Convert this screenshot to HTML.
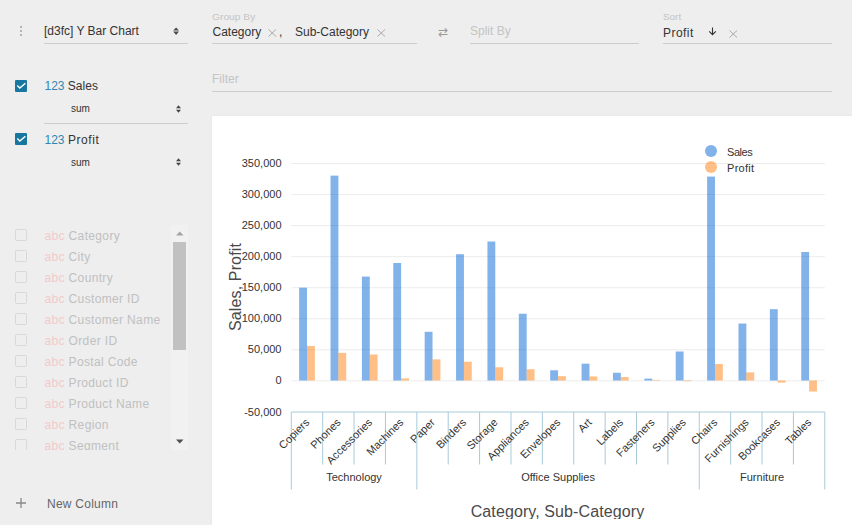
<!DOCTYPE html>
<html><head><meta charset="utf-8"><style>
*{box-sizing:border-box}
html,body{margin:0;padding:0}
body{width:852px;height:525px;overflow:hidden;background:#eeeeee;position:relative;font-family:"Liberation Sans",sans-serif;color:#333}
.a{position:absolute}
.t{position:absolute;white-space:nowrap;line-height:0}
.ul{position:absolute;height:1px;background:#ccc}
.cb{position:absolute;left:15px;width:12px;height:12px}
.cb.on{background:#17779f;border-radius:1px}
.cb.off{border:1px solid #d8d8d8;border-radius:1.5px}
.lbl{position:absolute;left:44.5px;font-size:12px;line-height:0;white-space:nowrap;color:#c0c0c0;letter-spacing:0.35px}
.abc{color:#f2caca}
.num{color:#2e88b2}
#chart{position:absolute;left:212px;top:116px;width:640px;height:409px;background:#fff;box-shadow:0 0 2px rgba(0,0,0,0.06)}
svg{position:absolute;left:0;top:0}
.g{stroke:#ececec;stroke-width:1}
.ax{stroke:#a9cad9;stroke-width:1}
.bs{fill:rgba(3,102,214,0.5)}
.bp{fill:rgba(255,127,14,0.5)}
.yt{font-size:11px;text-anchor:end;fill:#333}
.xt{font-size:11px;text-anchor:end;fill:#333}
.ct{font-size:11px;text-anchor:middle;fill:#333}
.lg{font-size:11px;fill:#333}
.at{font-size:16px;text-anchor:middle;fill:#4a4a4a}
</style></head><body>
<!-- sidebar -->
<div class="a" style="left:19.5px;top:25.8px;width:2.5px;height:2.5px;background:#a0a0a0;border-radius:50%"></div>
<div class="a" style="left:19.5px;top:29.8px;width:2.5px;height:2.5px;background:#a0a0a0;border-radius:50%"></div>
<div class="a" style="left:19.5px;top:33.8px;width:2.5px;height:2.5px;background:#a0a0a0;border-radius:50%"></div>
<div class="t" style="left:44px;top:31px;font-size:12px;color:#333">[d3fc] Y Bar Chart</div>
<svg class="a" style="left:172.5px;top:27px" width="7" height="9" viewBox="0 0 7 9"><path d="M0.2 3.5 L3.1 0.4 L6 3.5Z M0.2 4.5 L3.1 7.9 L6 4.5Z" fill="#4a4a4a"/></svg>
<div class="ul" style="left:44px;top:43px;width:144px"></div>

<div class="cb on" style="top:80px"></div>
<svg class="a" style="left:15px;top:80px" width="12" height="12"><path d="M2.3 5.5 L4.8 8.1 L10.4 3.2" stroke="#fff" stroke-width="1.4" fill="none"/></svg>
<div class="t" style="left:44.5px;top:85.5px;font-size:12px"><span class="num">123</span> Sales</div>
<div class="t" style="left:71px;top:108.5px;font-size:10px;color:#333">sum</div>
<svg class="a" style="left:176px;top:105px" width="5" height="8" viewBox="0 0 5 8"><path d="M0 3.3 L2.5 0.3 L5 3.3Z M0 4.7 L2.5 7.7 L5 4.7Z" fill="#444"/></svg>
<div class="ul" style="left:44px;top:123px;width:144px"></div>

<div class="cb on" style="top:133px"></div>
<svg class="a" style="left:15px;top:133px" width="12" height="12"><path d="M2.3 5.5 L4.8 8.1 L10.4 3.2" stroke="#fff" stroke-width="1.4" fill="none"/></svg>
<div class="t" style="left:44.5px;top:139.5px;font-size:12px"><span class="num">123</span> <span style="letter-spacing:0.6px">Profit</span></div>
<div class="t" style="left:71px;top:162.5px;font-size:10px;color:#333">sum</div>
<svg class="a" style="left:176px;top:158px" width="5" height="8" viewBox="0 0 5 8"><path d="M0 3.3 L2.5 0.3 L5 3.3Z M0 4.7 L2.5 7.7 L5 4.7Z" fill="#444"/></svg>

<div class="a" style="left:0;top:225px;width:190px;height:225px;overflow:hidden">
<div class="a" style="left:0;top:-225px;width:190px;height:500px">
<div class="cb off" style="top:229px"></div><div class="lbl off" style="top:236.4px"><span class="abc">abc</span> Category</div>
<div class="cb off" style="top:250px"></div><div class="lbl off" style="top:257.4px"><span class="abc">abc</span> City</div>
<div class="cb off" style="top:271px"></div><div class="lbl off" style="top:278.4px"><span class="abc">abc</span> Country</div>
<div class="cb off" style="top:292px"></div><div class="lbl off" style="top:299.4px"><span class="abc">abc</span> Customer ID</div>
<div class="cb off" style="top:313px"></div><div class="lbl off" style="top:320.4px"><span class="abc">abc</span> Customer Name</div>
<div class="cb off" style="top:334px"></div><div class="lbl off" style="top:341.4px"><span class="abc">abc</span> Order ID</div>
<div class="cb off" style="top:355px"></div><div class="lbl off" style="top:362.4px"><span class="abc">abc</span> Postal Code</div>
<div class="cb off" style="top:376px"></div><div class="lbl off" style="top:383.4px"><span class="abc">abc</span> Product ID</div>
<div class="cb off" style="top:397px"></div><div class="lbl off" style="top:404.4px"><span class="abc">abc</span> Product Name</div>
<div class="cb off" style="top:418px"></div><div class="lbl off" style="top:425.4px"><span class="abc">abc</span> Region</div>
<div class="cb off" style="top:439px"></div><div class="lbl off" style="top:446.4px"><span class="abc">abc</span> Segment</div>
</div>
<div class="a" style="left:171px;top:0;width:17px;height:225px;background:#f1f1f1"></div>
<svg class="a" style="left:175.5px;top:5.8px" width="8" height="5"><path d="M0 4.5 L3.75 0.5 L7.5 4.5Z" fill="#a3a3a3"/></svg>
<div class="a" style="left:173px;top:17px;width:13px;height:108px;background:#c1c1c1"></div>
<svg class="a" style="left:175.5px;top:213.5px" width="8" height="5"><path d="M0 0.5 L3.75 4.5 L7.5 0.5Z" fill="#505050"/></svg>
</div>

<svg class="a" style="left:15px;top:497px" width="12" height="12"><path d="M6 1 V11 M1 6 H11" stroke="#888" stroke-width="1.3"/></svg>
<div class="t" style="left:47px;top:503.5px;font-size:12px;color:#666;letter-spacing:0.25px">New Column</div>

<!-- top bar -->
<div class="t" style="left:212px;top:16.6px;font-size:9px;color:#c4c4c4;transform:scaleX(1.14);transform-origin:0 0">Group By</div>
<div class="t" style="left:212.5px;top:31.5px;font-size:12px;color:#333">Category</div>
<svg class="a" style="left:267.5px;top:29px" width="9" height="8"><path d="M0.5 0.5 L8 7.5 M8 0.5 L0.5 7.5" stroke="#aaa" stroke-width="1"/></svg>
<div class="t" style="left:279px;top:31.5px;font-size:12px;color:#333">,</div>
<div class="t" style="left:295px;top:31.5px;font-size:12px;color:#333">Sub-Category</div>
<svg class="a" style="left:376.5px;top:29px" width="9" height="8"><path d="M0.5 0.5 L8 7.5 M8 0.5 L0.5 7.5" stroke="#aaa" stroke-width="1"/></svg>
<div class="ul" style="left:212px;top:43px;width:205px"></div>
<div class="t" style="left:438px;top:32px;font-size:12px;color:#999">&#8644;</div>
<div class="t" style="left:470px;top:31px;font-size:12px;color:#c4c4c4">Split By</div>
<div class="ul" style="left:470px;top:43px;width:169px"></div>
<div class="t" style="left:663px;top:16.7px;font-size:9px;color:#c4c4c4;transform:scaleX(1.1);transform-origin:0 0">Sort</div>
<div class="t" style="left:663px;top:32.5px;font-size:12px;color:#333;letter-spacing:0.45px">Profit</div>
<svg class="a" style="left:708px;top:27px" width="9" height="9"><path d="M4.5 0.5 V7.5 M1.2 4.3 L4.5 7.6 L7.8 4.3" stroke="#333" stroke-width="1.1" fill="none"/></svg>
<svg class="a" style="left:728.5px;top:29.5px" width="9" height="8"><path d="M0.5 0.5 L8 7.5 M8 0.5 L0.5 7.5" stroke="#aaa" stroke-width="1"/></svg>
<div class="ul" style="left:663px;top:43px;width:169px"></div>
<div class="t" style="left:212px;top:78.5px;font-size:12px;color:#c4c4c4">Filter</div>
<div class="ul" style="left:212px;top:91px;width:620px"></div>

<div id="chart"><svg width="640" height="403" viewBox="212 116 640 403">
<line x1="291.30" x2="824.8" y1="380.85" y2="380.85" class="g"/>
<text x="281.5" y="384.30" class="yt">0</text>
<line x1="291.30" x2="824.8" y1="349.81" y2="349.81" class="g"/>
<text x="281.5" y="353.26" class="yt">50,000</text>
<line x1="291.30" x2="824.8" y1="318.76" y2="318.76" class="g"/>
<text x="281.5" y="322.21" class="yt">100,000</text>
<line x1="291.30" x2="824.8" y1="287.72" y2="287.72" class="g"/>
<text x="281.5" y="291.17" class="yt">150,000</text>
<line x1="291.30" x2="824.8" y1="256.68" y2="256.68" class="g"/>
<text x="281.5" y="260.13" class="yt">200,000</text>
<line x1="291.30" x2="824.8" y1="225.64" y2="225.64" class="g"/>
<text x="281.5" y="229.09" class="yt">250,000</text>
<line x1="291.30" x2="824.8" y1="194.59" y2="194.59" class="g"/>
<text x="281.5" y="198.04" class="yt">300,000</text>
<line x1="291.30" x2="824.8" y1="163.55" y2="163.55" class="g"/>
<text x="281.5" y="167.00" class="yt">350,000</text>
<text x="281.5" y="415.80" class="yt">-50,000</text>
<rect x="299.15" y="287.66" width="7.85" height="92.84" class="bs"/>
<rect x="306.99" y="345.97" width="7.85" height="34.53" class="bp"/>
<rect x="330.53" y="175.61" width="7.85" height="204.89" class="bs"/>
<rect x="338.37" y="352.86" width="7.85" height="27.64" class="bp"/>
<rect x="361.91" y="276.58" width="7.85" height="103.92" class="bs"/>
<rect x="369.76" y="354.46" width="7.85" height="26.04" class="bp"/>
<rect x="393.29" y="263.01" width="7.85" height="117.49" class="bs"/>
<rect x="401.14" y="378.40" width="7.85" height="2.10" class="bp"/>
<rect x="424.68" y="331.78" width="7.85" height="48.72" class="bs"/>
<rect x="432.52" y="359.36" width="7.85" height="21.14" class="bp"/>
<rect x="456.06" y="254.21" width="7.85" height="126.29" class="bs"/>
<rect x="463.90" y="361.74" width="7.85" height="18.76" class="bp"/>
<rect x="487.44" y="241.52" width="7.85" height="138.98" class="bs"/>
<rect x="495.29" y="367.29" width="7.85" height="13.21" class="bp"/>
<rect x="518.82" y="313.74" width="7.85" height="66.76" class="bs"/>
<rect x="526.67" y="369.24" width="7.85" height="11.26" class="bp"/>
<rect x="550.20" y="370.27" width="7.85" height="10.23" class="bs"/>
<rect x="558.05" y="376.18" width="7.85" height="4.32" class="bp"/>
<rect x="581.59" y="363.66" width="7.85" height="16.84" class="bs"/>
<rect x="589.43" y="376.45" width="7.85" height="4.05" class="bp"/>
<rect x="612.97" y="372.75" width="7.85" height="7.75" class="bs"/>
<rect x="620.81" y="377.06" width="7.85" height="3.44" class="bp"/>
<rect x="644.35" y="378.62" width="7.85" height="1.88" class="bs"/>
<rect x="652.20" y="379.91" width="7.85" height="0.59" class="bp"/>
<rect x="675.73" y="351.52" width="7.85" height="28.98" class="bs"/>
<rect x="683.58" y="380.50" width="7.85" height="0.74" class="bp"/>
<rect x="707.12" y="176.58" width="7.85" height="203.92" class="bs"/>
<rect x="714.96" y="363.99" width="7.85" height="16.51" class="bp"/>
<rect x="738.50" y="323.56" width="7.85" height="56.94" class="bs"/>
<rect x="746.34" y="372.39" width="7.85" height="8.11" class="bp"/>
<rect x="769.88" y="309.18" width="7.85" height="71.32" class="bs"/>
<rect x="777.73" y="380.50" width="7.85" height="2.16" class="bp"/>
<rect x="801.26" y="252.00" width="7.85" height="128.50" class="bs"/>
<rect x="809.11" y="380.50" width="7.85" height="11.00" class="bp"/>
<line x1="291.30" x2="824.8" y1="412.0" y2="412.0" class="ax"/>
<line x1="291.30" x2="291.30" y1="412.0" y2="489.5" class="ax"/>
<line x1="322.68" x2="322.68" y1="412.0" y2="464.5" class="ax"/>
<line x1="354.06" x2="354.06" y1="412.0" y2="464.5" class="ax"/>
<line x1="385.45" x2="385.45" y1="412.0" y2="464.5" class="ax"/>
<line x1="416.83" x2="416.83" y1="412.0" y2="489.5" class="ax"/>
<line x1="448.21" x2="448.21" y1="412.0" y2="464.5" class="ax"/>
<line x1="479.59" x2="479.59" y1="412.0" y2="464.5" class="ax"/>
<line x1="510.98" x2="510.98" y1="412.0" y2="464.5" class="ax"/>
<line x1="542.36" x2="542.36" y1="412.0" y2="464.5" class="ax"/>
<line x1="573.74" x2="573.74" y1="412.0" y2="464.5" class="ax"/>
<line x1="605.12" x2="605.12" y1="412.0" y2="464.5" class="ax"/>
<line x1="636.51" x2="636.51" y1="412.0" y2="464.5" class="ax"/>
<line x1="667.89" x2="667.89" y1="412.0" y2="464.5" class="ax"/>
<line x1="699.27" x2="699.27" y1="412.0" y2="489.5" class="ax"/>
<line x1="730.65" x2="730.65" y1="412.0" y2="464.5" class="ax"/>
<line x1="762.04" x2="762.04" y1="412.0" y2="464.5" class="ax"/>
<line x1="793.42" x2="793.42" y1="412.0" y2="464.5" class="ax"/>
<line x1="824.80" x2="824.80" y1="412.0" y2="489.5" class="ax"/>
<text transform="translate(310.09,423.0) rotate(-45)" class="xt">Copiers</text>
<text transform="translate(341.47,423.0) rotate(-45)" class="xt">Phones</text>
<text transform="translate(372.86,423.0) rotate(-45)" class="xt">Accessories</text>
<text transform="translate(404.24,423.0) rotate(-45)" class="xt">Machines</text>
<text transform="translate(435.62,423.0) rotate(-45)" class="xt">Paper</text>
<text transform="translate(467.00,423.0) rotate(-45)" class="xt">Binders</text>
<text transform="translate(498.39,423.0) rotate(-45)" class="xt">Storage</text>
<text transform="translate(529.77,423.0) rotate(-45)" class="xt">Appliances</text>
<text transform="translate(561.15,423.0) rotate(-45)" class="xt">Envelopes</text>
<text transform="translate(592.53,423.0) rotate(-45)" class="xt">Art</text>
<text transform="translate(623.91,423.0) rotate(-45)" class="xt">Labels</text>
<text transform="translate(655.30,423.0) rotate(-45)" class="xt">Fasteners</text>
<text transform="translate(686.68,423.0) rotate(-45)" class="xt">Supplies</text>
<text transform="translate(718.06,423.0) rotate(-45)" class="xt">Chairs</text>
<text transform="translate(749.44,423.0) rotate(-45)" class="xt">Furnishings</text>
<text transform="translate(780.83,423.0) rotate(-45)" class="xt">Bookcases</text>
<text transform="translate(812.21,423.0) rotate(-45)" class="xt">Tables</text>
<text x="354.06" y="481" class="ct">Technology</text>
<text x="558.05" y="481" class="ct">Office Supplies</text>
<text x="762.04" y="481" class="ct">Furniture</text>
<circle cx="711" cy="151" r="6" fill="rgba(3,102,214,0.5)"/>
<circle cx="711" cy="167" r="6" fill="rgba(255,127,14,0.5)"/>
<text x="727" y="155.8" class="lg" letter-spacing="-0.45">Sales</text>
<text x="727" y="171.6" class="lg" letter-spacing="0.3">Profit</text>
<text transform="translate(241,287.0) rotate(-90)" class="at" letter-spacing="0.13">Sales, Profit</text>
<text x="557.5" y="516.5" class="at" letter-spacing="0.1">Category, Sub-Category</text>
</svg></div>
</body></html>
